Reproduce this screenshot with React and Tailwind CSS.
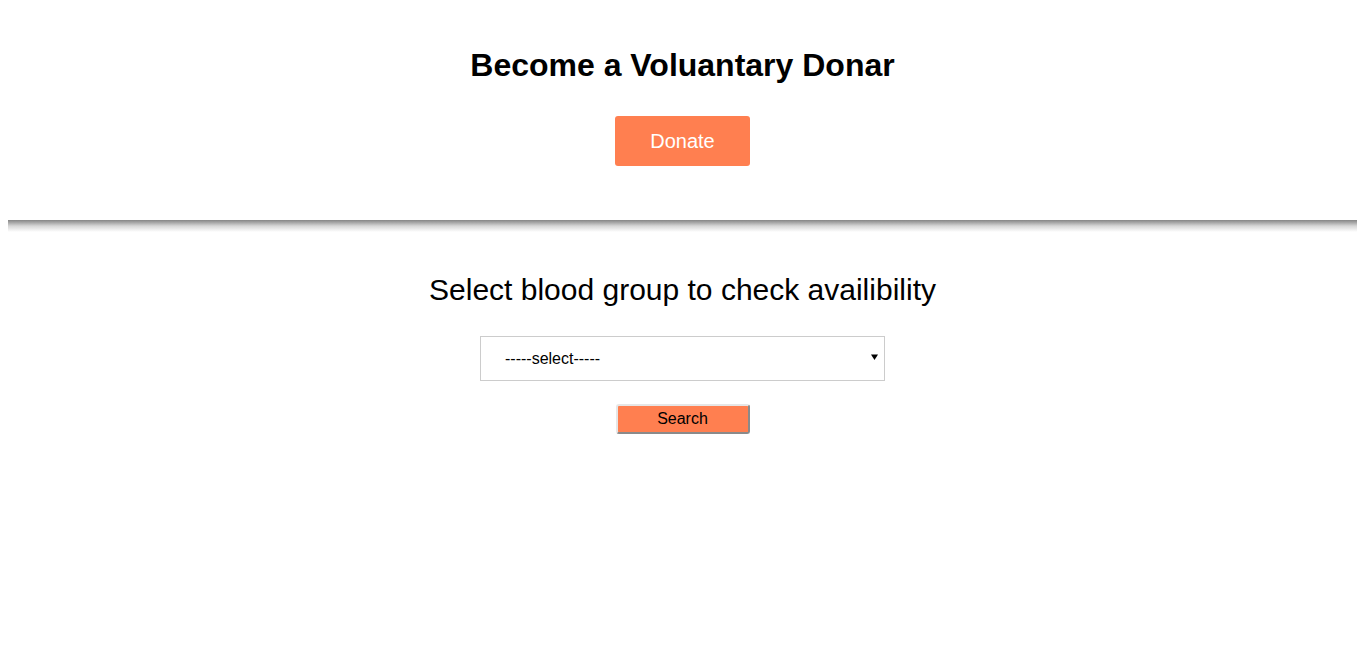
import React from 'react';

const App = () => {
    return (
        <div className="min-h-[661px] bg-white font-['Liberation_Sans',Arial,sans-serif] text-black">
            {/* top: become a donor */}
            <div className="flex flex-col items-center pt-[47px]">
                <h1 className="text-[32px] leading-[37px] font-bold">Become a Voluantary Donar</h1>
                <button className="mt-[32px] w-[135px] h-[50px] rounded-[3px] bg-[#ff7f50] text-white text-[20px]">
                    Donate
                </button>
            </div>

            {/* divider */}
            <div className="mx-2 mt-[54px] h-[12px] bg-gradient-to-b from-[#858585] via-[#d6d6d6] to-white" />

            {/* search */}
            <div className="flex flex-col items-center pt-[40px]">
                <h2 className="text-[30px] leading-[35px]">Select blood group to check availibility</h2>
                <div className="relative mt-[29px] w-[405px] h-[45px]">
                    <select className="w-full h-full appearance-none border border-[#cccccc] bg-white pl-[24px] text-[16px] text-black outline-none">
                        <option>-----select-----</option>
                        <option>A+</option>
                        <option>A-</option>
                        <option>B+</option>
                        <option>B-</option>
                        <option>AB+</option>
                        <option>AB-</option>
                        <option>O+</option>
                        <option>O-</option>
                    </select>
                    <svg className="absolute right-[7px] top-[18px] pointer-events-none" width="7" height="7" viewBox="0 0 7 7">
                        <path d="M0 0.5 H7 L3.5 6 Z" fill="#000" />
                    </svg>
                </div>
                <button className="mt-[23px] w-[134px] h-[30px] rounded-[3px] bg-[#ff7f50] text-[16px] text-black border-2 border-t-[#e6e6e6] border-l-[#e6e6e6] border-r-[#8a8a8a] border-b-[#8a8a8a]">
                    Search
                </button>
            </div>
        </div>
    );
};

export default App;
